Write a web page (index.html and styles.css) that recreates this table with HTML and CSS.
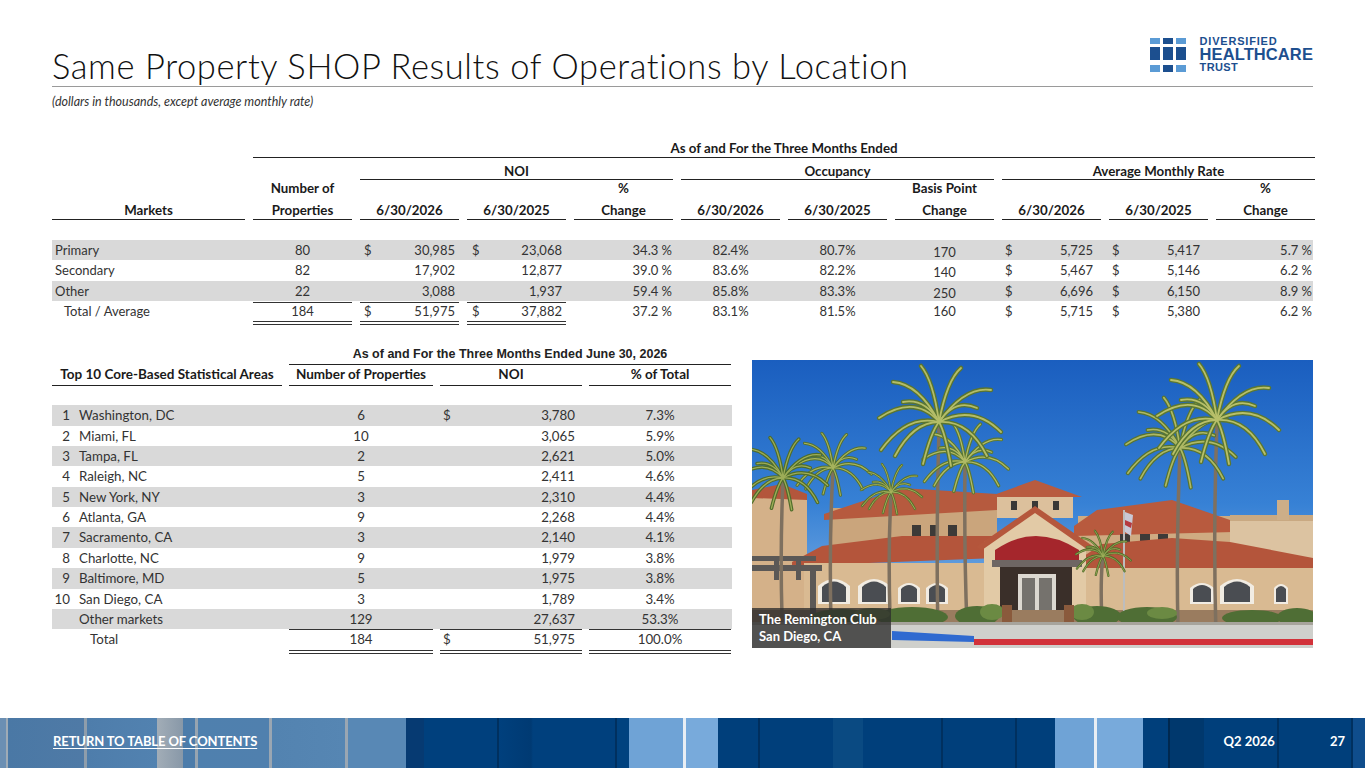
FILE: index.html
```html
<!DOCTYPE html>
<html lang="en">
<head>
<meta charset="utf-8">
<title>Same Property SHOP Results of Operations by Location</title>
<link rel="stylesheet" href="styles.css">
</head>
<body>
<div class="slide">
  <header class="top">
    <h1 class="title">Same Property SHOP Results of Operations by Location</h1>
    <div class="logo">
      <svg class="logo-mark" width="36" height="34" viewBox="0 0 36 34">
        <rect x="0" y="0" width="10" height="6" fill="#5b9bd5"/>
        <rect x="13" y="0" width="10" height="6" fill="#1c4f8f"/>
        <rect x="26" y="0" width="10" height="6" fill="#5b9bd5"/>
        <rect x="0" y="9" width="10" height="13" fill="#1c4f8f"/>
        <rect x="13" y="9" width="10" height="13" fill="#1c4f8f"/>
        <rect x="26" y="9" width="10" height="13" fill="#1c4f8f"/>
        <rect x="0" y="27" width="10" height="7" fill="#5b9bd5"/>
        <rect x="13" y="27" width="10" height="7" fill="#1c4f8f"/>
        <rect x="26" y="27" width="10" height="7" fill="#5b9bd5"/>
      </svg>
      <div class="logo-text"><span class="l1">DIVERSIFIED</span><span class="l2">HEALTHCARE</span><span class="l3">TRUST</span></div>
    </div>
  </header>
  <p class="subtitle">(dollars in thousands, except average monthly rate)</p>

  <section class="t1">
    <div class="r h-a"><div class="hc span-all">As of and For the Three Months Ended</div></div>
    <div class="r h-b">
      <div class="hc g-noi">NOI</div>
      <div class="hc g-occ">Occupancy</div>
      <div class="hc g-amr">Average Monthly Rate</div>
    </div>
    <div class="r h-c">
      <div class="hc2"><span>Markets</span></div>
      <div class="hc2"><span>Number of</span><span>Properties</span></div>
      <div class="hc2"><span>6/30/2026</span></div>
      <div class="hc2"><span>6/30/2025</span></div>
      <div class="hc2"><span>%</span><span>Change</span></div>
      <div class="hc2"><span>6/30/2026</span></div>
      <div class="hc2"><span>6/30/2025</span></div>
      <div class="hc2"><span>Basis Point</span><span>Change</span></div>
      <div class="hc2"><span>6/30/2026</span></div>
      <div class="hc2"><span>6/30/2025</span></div>
      <div class="hc2"><span>%</span><span>Change</span></div>
    </div>
    <div class="spacer1"></div>

    <div class="r d band">
      <div class="name">Primary</div><div class="cc">80</div>
      <div class="money m-noi1"><span>$</span><span>30,985</span></div>
      <div class="money m-noi2"><span>$</span><span>23,068</span></div>
      <div class="pct">34.3 %</div><div class="cc">82.4%</div><div class="cc">80.7%</div><div class="cc bp">170</div>
      <div class="money m-amr"><span>$</span><span>5,725</span></div>
      <div class="money m-amr"><span>$</span><span>5,417</span></div>
      <div class="pct2">5.7 %</div>
    </div>
    <div class="r d">
      <div class="name">Secondary</div><div class="cc">82</div>
      <div class="money m-noi1"><span></span><span>17,902</span></div>
      <div class="money m-noi2"><span></span><span>12,877</span></div>
      <div class="pct">39.0 %</div><div class="cc">83.6%</div><div class="cc">82.2%</div><div class="cc bp">140</div>
      <div class="money m-amr"><span>$</span><span>5,467</span></div>
      <div class="money m-amr"><span>$</span><span>5,146</span></div>
      <div class="pct2">6.2 %</div>
    </div>
    <div class="r d band">
      <div class="name">Other</div><div class="cc ul">22</div>
      <div class="money m-noi1 ul"><span></span><span>3,088</span></div>
      <div class="money m-noi2 ul"><span></span><span>1,937</span></div>
      <div class="pct">59.4 %</div><div class="cc">85.8%</div><div class="cc">83.3%</div><div class="cc bp">250</div>
      <div class="money m-amr"><span>$</span><span>6,696</span></div>
      <div class="money m-amr"><span>$</span><span>6,150</span></div>
      <div class="pct2">8.9 %</div>
    </div>
    <div class="r d tot">
      <div class="name ind">Total / Average</div><div class="cc dul">184</div>
      <div class="money m-noi1 dul"><span>$</span><span>51,975</span></div>
      <div class="money m-noi2 dul"><span>$</span><span>37,882</span></div>
      <div class="pct">37.2 %</div><div class="cc">83.1%</div><div class="cc">81.5%</div><div class="cc">160</div>
      <div class="money m-amr"><span>$</span><span>5,715</span></div>
      <div class="money m-amr"><span>$</span><span>5,380</span></div>
      <div class="pct2">6.2 %</div>
    </div>
  </section>

  <section class="lower">
    <div class="t2">
      <div class="q h1r"><div class="hd span3">As of and For the Three Months Ended June 30, 2026</div></div>
      <div class="q h2r">
        <div class="hd2">Top 10 Core-Based Statistical Areas</div>
        <div class="hd2">Number of Properties</div>
        <div class="hd2">NOI</div>
        <div class="hd2">% of Total</div>
      </div>
      <div class="spacer2"></div>
      <div class="q e band"><div class="nm"><span class="rk">1</span>Washington, DC</div><div class="cc">6</div><div class="money2"><span>$</span><span>3,780</span></div><div class="cc">7.3%</div></div>
      <div class="q e"><div class="nm"><span class="rk">2</span>Miami, FL</div><div class="cc">10</div><div class="money2"><span></span><span>3,065</span></div><div class="cc">5.9%</div></div>
      <div class="q e band"><div class="nm"><span class="rk">3</span>Tampa, FL</div><div class="cc">2</div><div class="money2"><span></span><span>2,621</span></div><div class="cc">5.0%</div></div>
      <div class="q e"><div class="nm"><span class="rk">4</span>Raleigh, NC</div><div class="cc">5</div><div class="money2"><span></span><span>2,411</span></div><div class="cc">4.6%</div></div>
      <div class="q e band"><div class="nm"><span class="rk">5</span>New York, NY</div><div class="cc">3</div><div class="money2"><span></span><span>2,310</span></div><div class="cc">4.4%</div></div>
      <div class="q e"><div class="nm"><span class="rk">6</span>Atlanta, GA</div><div class="cc">9</div><div class="money2"><span></span><span>2,268</span></div><div class="cc">4.4%</div></div>
      <div class="q e band"><div class="nm"><span class="rk">7</span>Sacramento, CA</div><div class="cc">3</div><div class="money2"><span></span><span>2,140</span></div><div class="cc">4.1%</div></div>
      <div class="q e"><div class="nm"><span class="rk">8</span>Charlotte, NC</div><div class="cc">9</div><div class="money2"><span></span><span>1,979</span></div><div class="cc">3.8%</div></div>
      <div class="q e band"><div class="nm"><span class="rk">9</span>Baltimore, MD</div><div class="cc">5</div><div class="money2"><span></span><span>1,975</span></div><div class="cc">3.8%</div></div>
      <div class="q e"><div class="nm"><span class="rk">10</span>San Diego, CA</div><div class="cc">3</div><div class="money2"><span></span><span>1,789</span></div><div class="cc">3.4%</div></div>
      <div class="q e band"><div class="nm other">Other markets</div><div class="cc ul">129</div><div class="money2 ul"><span></span><span>27,637</span></div><div class="cc ul">53.3%</div></div>
      <div class="q e tot2"><div class="nm total">Total</div><div class="cc dul">184</div><div class="money2 dul"><span>$</span><span>51,975</span></div><div class="cc dul">100.0%</div></div>
    </div>

    <figure class="photo">
      <svg class="photo-svg" viewBox="0 0 561 288" preserveAspectRatio="none">
        <defs>
          <linearGradient id="sky" x1="0" y1="0" x2="0" y2="1">
            <stop offset="0" stop-color="#1a5ebf"/>
            <stop offset="0.5" stop-color="#3781d5"/>
            <stop offset="0.8" stop-color="#6fa6e0"/>
            <stop offset="1" stop-color="#9cc2e8"/>
          </linearGradient>
          <g id="fr">
            <path d="M0 0 Q-24 -28 -60 -4"/>
            <path d="M0 0 Q-32 -8 -58 28"/>
            <path d="M0 0 Q-20 -38 -46 -40"/>
            <path d="M0 0 Q-6 -42 -18 -56"/>
            <path d="M0 0 Q8 -42 22 -54"/>
            <path d="M0 0 Q26 -36 52 -32"/>
            <path d="M0 0 Q34 -18 62 10"/>
            <path d="M0 0 Q30 -2 48 34"/>
            <path d="M0 0 Q-26 0 -44 34"/>
            <path d="M0 0 Q6 10 12 44"/>
            <path d="M0 0 Q-8 10 -16 42"/>
            <path d="M0 0 Q-14 -24 -36 -20"/>
            <path d="M0 0 Q16 -24 38 -14"/>
          </g>
        </defs>
        <rect width="561" height="288" fill="url(#sky)"/>
        <!-- left back building -->
        <rect x="0" y="135" width="55" height="130" fill="#d4b189"/>
        <polygon points="0,130 30,124 55,134 55,140 0,138" fill="#b3563c"/>
        <!-- left wing upper -->
        <rect x="80" y="148" width="165" height="40" fill="#caa57c"/>
        <polygon points="72,154 150,128 245,134 245,150 72,160" fill="#b65a3e"/>
        <rect x="160" y="165" width="9" height="14" fill="#3d3a38"/>
        <rect x="178" y="165" width="9" height="14" fill="#3d3a38"/>
        <rect x="196" y="165" width="9" height="14" fill="#3d3a38"/>
        <!-- tower -->
        <rect x="245" y="134" width="76" height="24" fill="#dcc09c"/>
        <polygon points="236,137 283,120 330,137" fill="#b85b3f"/>
        <rect x="259" y="141" width="6" height="9" fill="#3a3836"/>
        <rect x="280" y="141" width="6" height="9" fill="#3a3836"/>
        <rect x="301" y="141" width="6" height="9" fill="#3a3836"/>
        <!-- right wing upper -->
        <rect x="326" y="156" width="155" height="40" fill="#cfab82"/>
        <polygon points="322,166 345,150 420,140 478,160 482,172 322,176" fill="#b85a3e"/>
        <rect x="368" y="174" width="10" height="16" fill="#3d3a38"/>
        <rect x="388" y="174" width="10" height="16" fill="#3d3a38"/>
        <rect x="406" y="174" width="10" height="16" fill="#3d3a38"/>
        <!-- right flat building -->
        <rect x="478" y="160" width="83" height="103" fill="#dcc3a1"/>
        <rect x="478" y="155" width="83" height="6" fill="#c9a982"/>
        <rect x="525" y="140" width="12" height="20" fill="#cdae88"/>
        <!-- left wing lower -->
        <polygon points="40,202 70,186 150,176 245,176 245,198 40,206" fill="#b4553b"/>
        <rect x="52" y="203" width="193" height="60" fill="#d9ba92"/>
        <!-- right wing lower -->
        <polygon points="326,200 350,184 420,178 478,182 561,198 561,210 326,210" fill="#b4553b"/>
        <rect x="326" y="208" width="235" height="55" fill="#d9ba92"/>
        <!-- central gable -->
        <polygon points="232,182 283,150 334,182 334,262 232,262" fill="#e2caa6"/>
        <polygon points="224,187 283,146 342,187 336,190 283,153 230,190" fill="#b5573c"/>
        <!-- windows lower -->
        <g fill="#f1ece3">
          <path d="M66 244 V226 Q82 212 98 226 V244 Z"/>
          <path d="M106 244 V226 Q122 212 138 226 V244 Z"/>
          <path d="M146 244 V228 Q157 218 168 228 V244 Z"/>
          <path d="M174 244 V228 Q185 218 196 228 V244 Z"/>
          <path d="M438 244 V228 Q450 218 462 228 V244 Z"/>
          <path d="M468 244 V226 Q485 212 502 226 V244 Z"/>
          <path d="M522 244 V228 Q529 220 536 228 V244 Z"/>
        </g>
        <g fill="#4a4d52">
          <path d="M70 242 V227 Q82 216 94 227 V242 Z"/>
          <path d="M110 242 V227 Q122 216 134 227 V242 Z"/>
          <path d="M149 242 V229 Q157 221 165 229 V242 Z"/>
          <path d="M177 242 V229 Q185 221 193 229 V242 Z"/>
          <path d="M441 242 V229 Q450 221 459 229 V242 Z"/>
          <path d="M472 242 V227 Q485 216 498 227 V242 Z"/>
          <path d="M524 242 V229 Q529 223 534 229 V242 Z"/>
        </g>
        <!-- awning & entrance -->
        <rect x="248" y="205" width="72" height="57" fill="#3a2f29"/>
        <rect x="266" y="214" width="38" height="46" fill="#dcd8d0"/>
        <rect x="270" y="218" width="13" height="40" fill="#75726d"/>
        <rect x="287" y="218" width="13" height="40" fill="#75726d"/>
        <path d="M243 202 L243 190 Q283 162 327 190 L327 202 Z" fill="#a5262c"/>
        <rect x="240" y="200" width="90" height="7" fill="#6e6663"/>
        <!-- base band -->
        <rect x="0" y="250" width="561" height="13" fill="#9a7c5f"/>
        <!-- pergola -->
        <g fill="#5b5856">
          <rect x="0" y="196" width="64" height="5"/>
          <rect x="0" y="205" width="70" height="6"/>
          <rect x="22" y="198" width="5" height="22"/>
          <rect x="44" y="198" width="5" height="22"/>
          <rect x="58" y="211" width="6" height="50"/>
        </g>
        <!-- flag -->
        <rect x="371" y="150" width="2" height="118" fill="#bdbdbd"/>
        <path d="M373 152 L381 155 L379 176 L373 172 Z" fill="#c9c9d6"/>
        <path d="M373 160 L380 163 L379 168 L373 165 Z" fill="#b53a40"/>
        <!-- palm trunks -->
        <g stroke="#7e705f" stroke-width="3.5" stroke-linecap="round" fill="none">
          <path d="M186 272 Q184 180 187 66"/>
          <path d="M215 266 Q212 190 213 104"/>
          <path d="M79 262 Q77 180 81 110"/>
          <path d="M30 256 Q28 190 31 120"/>
          <path d="M138 256 Q136 190 139 134"/>
          <path d="M426 268 Q424 190 428 90"/>
          <path d="M464 276 Q461 170 465 62"/>
          <path d="M350 262 Q348 220 351 196"/>
        </g>
        <!-- palm crowns -->
        <g fill="none" stroke-linecap="round">
          <g transform="translate(213,102) scale(0.7)"><use href="#fr" stroke="#5d7930" stroke-width="5"/><use href="#fr" stroke="#b1bb66" stroke-width="1.8"/></g>
          <g transform="translate(187,62) scale(1.0)"><use href="#fr" stroke="#5a7530" stroke-width="4.5"/><use href="#fr" stroke="#b4bd68" stroke-width="1.8"/></g>
          <g transform="translate(81,108) scale(0.62)"><use href="#fr" stroke="#56722e" stroke-width="5"/><use href="#fr" stroke="#a7b45e" stroke-width="1.8"/></g>
          <g transform="translate(31,118) scale(0.72)"><use href="#fr" stroke="#4f6d2b" stroke-width="5"/><use href="#fr" stroke="#9dad58" stroke-width="1.8"/></g>
          <g transform="translate(139,132) scale(0.5)"><use href="#fr" stroke="#58732e" stroke-width="5"/><use href="#fr" stroke="#a6b25c" stroke-width="1.8"/></g>
          <g transform="translate(428,88) scale(0.9)"><use href="#fr" stroke="#587430" stroke-width="4.5"/><use href="#fr" stroke="#aeb964" stroke-width="1.8"/></g>
          <g transform="translate(465,60) scale(1.0)"><use href="#fr" stroke="#5c7831" stroke-width="4.5"/><use href="#fr" stroke="#b8c06a" stroke-width="1.8"/></g>
          <g transform="translate(351,196) scale(0.45)"><use href="#fr" stroke="#4f6d2b" stroke-width="5"/><use href="#fr" stroke="#9dad58" stroke-width="1.8"/></g>
        </g>
        <!-- shrubs -->
        <g fill="#4f6e35">
          <ellipse cx="90" cy="258" rx="32" ry="9"/>
          <ellipse cx="160" cy="257" rx="36" ry="10"/>
          <ellipse cx="225" cy="256" rx="22" ry="10"/>
          <ellipse cx="345" cy="256" rx="24" ry="10"/>
          <ellipse cx="395" cy="257" rx="30" ry="10"/>
          <ellipse cx="500" cy="258" rx="30" ry="8"/>
          <ellipse cx="545" cy="257" rx="20" ry="9"/>
        </g>
        <g fill="#6b8a43">
          <ellipse cx="120" cy="254" rx="18" ry="6"/>
          <ellipse cx="240" cy="252" rx="12" ry="8"/>
          <ellipse cx="330" cy="252" rx="12" ry="8"/>
          <ellipse cx="410" cy="253" rx="15" ry="6"/>
        </g>
        <rect x="250" y="245" width="10" height="18" fill="#8a5a3c"/>
        <rect x="312" y="245" width="10" height="18" fill="#8a5a3c"/>
        <!-- sidewalk & curb -->
        <rect x="0" y="262" width="561" height="26" fill="#cfd0cc"/>
        <rect x="0" y="262" width="561" height="3" fill="#a7a49c"/>
        <polygon points="140,271 222,276 222,282 140,280" fill="#2f6ad0"/>
        <rect x="222" y="279" width="339" height="6" fill="#d2323a"/>
      </svg>
      <figcaption class="caption">The Remington Club<br>San Diego, CA</figcaption>
    </figure>
  </section>

  <footer class="foot">
    <a class="toc" href="#">RETURN TO TABLE OF CONTENTS</a>
    <span class="qtr">Q2 2026</span>
    <span class="page">27</span>
  </footer>
</div>
</body>
</html>
```

FILE: styles.css
```css
* { box-sizing: border-box; margin: 0; padding: 0; }
html, body { width: 1365px; height: 768px; overflow: hidden; background: #fff; }
body { font-family: "Lato", "Open Sans", "Liberation Sans", sans-serif; color: #333; }

.slide { width: 1365px; height: 768px; display: flex; flex-direction: column; }

/* header */
.top {
  display: flex; align-items: flex-start; justify-content: space-between;
  margin: 0 52px; border-bottom: 1px solid #9a9a9a;
}
.title {
  font-weight: 300; font-size: 34.5px; line-height: 40px; color: #111;
  padding-top: 46px; letter-spacing: 0.6px;
}
.logo { display: flex; align-items: flex-start; gap: 14px; margin-top: 36px; margin-right: 0; }
.logo-mark { display: block; margin-top: 1.5px; }
.logo-text { display: flex; flex-direction: column; font-family: "Liberation Sans", Arial, sans-serif; font-weight: 700; color: #1d4f8f; }
.logo-text .l1 { font-size: 11px; line-height: 11px; letter-spacing: 0.8px; }
.logo-text .l2 { font-size: 16.5px; line-height: 15px; letter-spacing: 0.1px; }
.logo-text .l3 { font-size: 11px; line-height: 11px; letter-spacing: 0.4px; }

.subtitle { margin: 7px 52px 0; font-size: 12.5px; line-height: 16px; font-style: italic; color: #333; }

/* top table */
.t1 { margin: 31px 52px 0; --cols: 193px repeat(10, 99px); }
.t1 .r { display: grid; grid-template-columns: var(--cols); column-gap: 8px; }
.hc, .hc2 { font-weight: 700; font-size: 13.3px; color: #1a1a1a; text-align: center; }
.h-a { height: 17px; }
.h-a .span-all { grid-column: 2 / 12; line-height: 15px; border-bottom: 1.5px solid #222; }
.h-b { height: 22px; align-items: end; }
.h-b .hc { line-height: 15px; border-bottom: 1.5px solid #222; }
.g-noi { grid-column: 3 / 6; }
.g-occ { grid-column: 6 / 9; }
.g-amr { grid-column: 9 / 12; }
.h-c { height: 40px; }
.hc2 { display: flex; flex-direction: column; justify-content: flex-end; gap: 6px; border-bottom: 1.5px solid #222; padding-bottom: 1px; }
.hc2 span { display: block; line-height: 16px; }
.spacer1 { height: 20px; }

.t1 .d { height: 20.33px; font-size: 13px; line-height: 20px; }
.band { background: #d9d9d9; }
.name { padding-left: 3px; }
.name.ind { padding-left: 12px; }
.cc { text-align: center; }
.bp { padding-top: 2px; }
.money { display: flex; justify-content: space-between; }
.m-noi1 { padding: 0 4px; }
.m-noi2 { padding: 0 4px 0 5px; }
.m-amr { padding: 0 8px 0 3px; }
.pct { text-align: right; padding-right: 1px; }
.pct2 { text-align: right; padding-right: 3px; }
.ul { border-bottom: 1px solid #333; }
.t1 .tot { height: 24.33px; }
.dul { border-bottom: 4px double #333; }

/* lower */
.lower { display: flex; gap: 20px; margin: 21px 52px 0; align-items: flex-start; }
.t2 { width: 680px; --cols2: 230px 144px 142px 142px; }
.t2 .q { display: grid; grid-template-columns: var(--cols2); column-gap: 7px; }
.h1r { height: 19px; }
.span3 {
  grid-column: 2 / 5; text-align: center; font-family: "Liberation Sans", Arial, sans-serif;
  font-weight: 700; font-size: 12.5px; line-height: 17px; color: #222; border-bottom: 1.5px solid #222;
}
.h2r { height: 21px; }
.hd2 { font-weight: 700; font-size: 13.5px; line-height: 19px; color: #1a1a1a; text-align: center; border-bottom: 1.5px solid #222; white-space: nowrap; }
.spacer2 { height: 19px; }
.t2 .e { height: 20.36px; font-size: 13.3px; line-height: 20px; }
.rk { display: inline-block; width: 18px; text-align: right; margin-right: 9px; }
.nm.other { padding-left: 27px; }
.nm.total { padding-left: 38px; }
.money2 { display: flex; justify-content: space-between; padding: 0 7px 0 3px; }
.t2 .tot2 { height: 24.36px; }

.photo { position: relative; width: 561px; height: 288px; margin-top: 14px; overflow: hidden; }
.photo-svg { display: block; width: 561px; height: 288px; }
.caption {
  position: absolute; left: 0; bottom: 0; width: 139px; padding: 3px 0 3px 7px;
  background: rgba(45, 45, 45, 0.78); color: #fff; font-weight: 700; font-size: 13px; line-height: 17px;
}

/* footer */
.foot {
  margin-top: auto; height: 50px; display: flex; align-items: center; padding: 0 20px 4px 53px;
  color: #fff; font-weight: 700; font-size: 13px;
  background: linear-gradient(to right,
    #6b8fb3 0, #6b8fb3 6px, #9fabb6 6px, #9fabb6 8px,
    #4a78a5 8px, #4f7aa6 84px, #8e9dab 84px, #8e9dab 87px,
    #4e7dab 87px, #5282b0 157px, #a2adb7 157px, #8898a8 183px,
    #4c7caa 183px, #4c7caa 195px, #97a4b0 195px, #97a4b0 198px,
    #4f80ae 198px, #5080ae 269px, #9aa6b2 269px, #9aa6b2 272px,
    #5383b0 272px, #5686b3 345px, #9aa6b2 345px, #9aa6b2 348px,
    #5888b5 348px, #5888b5 406px,
    #063a72 406px, #063a72 424px, #00407d 424px, #00407d 497px, #00305f 497px, #00305f 499px,
    #00407d 499px, #003a73 531px, #00407d 533px, #00407d 615px, #00305f 615px, #00305f 617px, #00427f 617px, #00427f 629px,
    #6fa3d6 629px, #6fa3d6 683px, #e8eef4 683px, #e8eef4 686px, #78aadb 686px, #78aadb 718px,
    #003f7b 718px, #003f7b 758px, #002f5e 758px, #002f5e 760px, #003f7b 760px, #003f7b 833px,
    #0a4a82 833px, #0a4a82 863px, #003f7b 863px, #003f7b 941px, #00305f 941px, #00305f 943px,
    #003f7b 943px, #003f7b 1015px, #00305f 1015px, #00305f 1017px, #003f7b 1017px, #003f7b 1055px,
    #6fa3d6 1055px, #6fa3d6 1094px, #e8eef4 1094px, #e8eef4 1097px, #78aadb 1097px, #78aadb 1143px,
    #003f7b 1143px, #003f7b 1168px, #00284f 1168px, #00284f 1170px, #00386d 1170px, #00386d 1204px,
    #003f7b 1204px, #003f7b 1277px, #00305f 1277px, #00305f 1279px, #003f7b 1279px, #003f7b 1351px,
    #00305f 1351px, #00305f 1353px, #0f4d8c 1353px, #0f4d8c 1365px);
}
.toc { color: #fff; text-decoration: underline; text-underline-offset: 2px; font-size: 13px; letter-spacing: -0.1px; }
.qtr { margin-left: auto; }
.page { margin-left: 55px; }
```
